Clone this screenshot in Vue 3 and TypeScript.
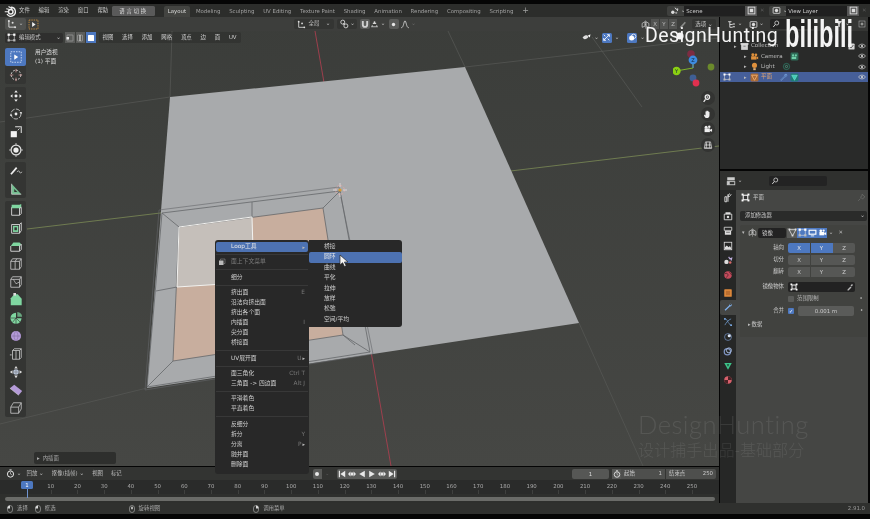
<template>
  <div class="app">
    <header class="topbar">
      <Ic n="blender" class="logo" :s="12" />
      <nav class="top-menu">
        <span v-for="m in topMenus" :key="m">{{ m }}</span>
      </nav>
      <span class="lang-btn">语言切换</span>
      <nav class="tabs">
        <span v-for="t in workspaces" :key="t" class="tab" :class="{ on: t === 'Layout' }">{{ t }}</span>
        <span class="tab plus">+</span>
      </nav>
      <div class="scene-box">
        <span class="scene-ic"><Ic n="scene" :s="9" /><i class="caret">⌄</i></span>
        <span class="scene-field">Scene</span>
        <span class="copy"><Ic n="copy" :s="9" /></span>
        <span class="close">✕</span>
      </div>
      <div class="scene-box layer">
        <span class="scene-ic"><Ic n="layer" :s="9" /><i class="caret">⌄</i></span>
        <span class="scene-field">View Layer</span>
        <span class="copy"><Ic n="copy" :s="9" /></span>
        <span class="close">✕</span>
      </div>
    </header>

    <div class="main">
      <div class="left">
        <section class="viewport">
          <svg class="scene" viewBox="0 17 719 449" width="719" height="449">
            <line x1="27" y1="229" x2="719" y2="146" stroke="#7b8a55" stroke-width=".8" />
            <line x1="315" y1="31" x2="391" y2="466" stroke="#a8404f" stroke-width=".9" />
            <g stroke="#585956" stroke-width=".7">
              <line x1="172" y1="31" x2="170" y2="97" />
              <line x1="0" y1="122" x2="170" y2="97" />
              <line x1="0" y1="424" x2="147" y2="388" />
              <line x1="448" y1="31" x2="465" y2="67" />
              <line x1="592" y1="37" x2="642" y2="107" />
              <line x1="579" y1="323" x2="643" y2="466" />
              <line x1="465" y1="67" x2="719" y2="38" />
            </g>
            <polygon points="170,97 465,67 579,323 147,388" fill="#a8aaac" />
            <polygon points="179,227 323,208 343,335 173,361" fill="#c8ae9e" />
            <polygon points="179,227 252,217 254,282 177,287" fill="#c5bfba" />
            <g fill="none" stroke="#65676a" stroke-width=".8">
              <polygon points="162,213 340,191 370,352 147,387" />
              <polygon points="159,210 339,187 373,354 145,390" stroke-width=".6" />
              <polygon points="179,227 323,208 343,335 173,361" />
              <path d="M162 213 179 227M340 191 323 208M370 352 343 335M147 387 173 361M252 202 252 217M156 291 177 287M254 282 258 350M254 282 343 274M355 345 343 335" />
            </g>
            <polygon points="179,227 252,217 254,282 177,287" fill="none" stroke="#f2f2f0" stroke-width="1" />
            <g fill="none" stroke="#e6a3a3" stroke-width=".7">
              <circle cx="340" cy="190" r="4.5" stroke-dasharray="2 1.5" />
              <path d="M340 183v4M340 193v4M333 190h4M343 190h4" stroke="#f0e8e8" />
            </g>
            <circle cx="340" cy="190" r="1.6" fill="#d99a2e" />
            <circle cx="680" cy="36" r="3.6" fill="#f4f4f4" />
          </svg>

          <div class="tool-header">
            <span class="editor-type"><Ic n="axes" :s="10" /><i class="caret">⌄</i></span>
            <span class="active-tool"><Ic n="selectOrange" :s="11" /></span>
            <span class="orient"><Ic n="axes" :s="9" /><b>全局</b><i class="caret">⌄</i></span>
            <span class="pivot"><Ic n="pivot" :s="10" /><i class="caret">⌄</i></span>
            <span class="snap"><Ic n="magnet" :s="9" class="snap-mag" /><Ic n="snap" :s="9" /><i class="caret">⌄</i></span>
            <span class="prop-edit"><Ic n="dot" :s="9" /></span>
            <span class="falloff"><Ic n="falloff" :s="10" /><i class="caret dim">⌄</i></span>
            <span class="grow" />
            <span class="axis-box">
              <Ic n="mirror" :s="9" />
              <b>X</b><b>Y</b><b>Z</b>
              <Ic n="knifeDim" :s="9" />
            </span>
            <span class="opts">选项<i class="caret">⌄</i></span>
          </div>

          <div class="mode-row">
            <span class="mode-select"><Ic n="editMode" :s="9" /><b>编辑模式</b><i class="caret">⌄</i></span>
            <span class="sel-modes">
              <i><Ic n="vert" :s="8" /></i><i><Ic n="edge" :s="8" /></i><i class="on"><Ic n="face" :s="8" /></i>
            </span>
            <nav class="mode-menu">
              <span v-for="m in modeMenus" :key="m">{{ m }}</span>
            </nav>
            <span class="grow" />
            <span class="vis-tools">
              <Ic n="eyeArrow" :s="9" /><i class="caret">⌄</i>
              <span class="blue-btn"><Ic n="gizmoArrows" :s="9" /></span><i class="caret">⌄</i>
              <span class="blue-btn round"><Ic n="overlay" :s="9" /></span><i class="caret">⌄</i>
            </span>
          </div>

          <div class="view-body">
            <div class="toolbar">
              <div v-for="(grp, i) in toolGroups" :key="i" class="tool-group">
                <span v-for="t in grp" :key="t" class="tool" :class="{ on: t === 'select' }">
                  <Ic :n="t" :s="14" />
                </span>
              </div>
            </div>
            <div class="view-info">
              <p>用户透视</p>
              <p>(1) 平面</p>
            </div>
          </div>

          <!-- 导航小工具 -->
          <svg class="gizmo" viewBox="0 0 60 46" width="60" height="46">
            <circle cx="18" cy="5" r="3.8" fill="#7d2c42" />
            <circle cx="38" cy="18" r="3.4" fill="#6b8a2b" />
            <circle cx="20" cy="29" r="3.4" fill="#3f5f95" />
            <circle cx="23" cy="34" r="3.4" fill="#e0304f" />
            <path d="M20 11V19L3 22" fill="none" stroke="#7fb32a" stroke-width="1" />
            <path d="M20 11V19" fill="none" stroke="#4d8ad8" stroke-width="1" />
            <circle cx="20" cy="11" r="4.4" fill="#3d8be0" />
            <text x="20" y="13" class="gz">Z</text>
            <circle cx="3.5" cy="22" r="4.2" fill="#8bd012" />
            <text x="3.5" y="24" class="gz">Y</text>
          </svg>
          <div class="nav-btns">
            <span v-for="n in navIcons" :key="n" class="nav-btn"><Ic :n="n" :s="10" /></span>
          </div>

          <div class="last-op"><i>▸</i>内插面</div>

          <!-- 右键菜单 -->
          <div class="menu main-menu">
            <template v-for="(row, i) in contextMenu" :key="i">
              <div v-if="row === '-'" class="sep" />
              <div v-else class="row" :class="{ active: row.active, muted: row.muted }">
                <Ic v-if="row.muted" n="ctxCube" :s="8" class="row-ic" />
                <span class="label">{{ row.label }}</span>
                <span v-if="row.key" class="key">{{ row.key }}</span>
                <span v-if="row.sub" class="arrow">▸</span>
              </div>
            </template>
          </div>
          <div class="menu sub-menu">
            <div v-for="s in loopTools" :key="s" class="row" :class="{ active: s === '圆环' }">
              <span class="label">{{ s }}</span>
            </div>
          </div>
          <svg class="cursor" viewBox="0 0 10 14" width="10" height="14">
            <path d="M1 1V11L3.6 8.7 5.4 12.6 7.2 11.8 5.4 8H9Z" fill="#f4f4f4" stroke="#222" stroke-width=".7" />
          </svg>
        </section>

        <section class="timeline">
          <div class="tl-header">
            <Ic n="clock" :s="9" class="tl-clock" /><i class="caret">⌄</i>
            <span class="tl-menu first">回放<i class="caret">⌄</i></span>
            <span class="tl-menu">抠像(插帧)<i class="caret">⌄</i></span>
            <span class="tl-menu">视图</span>
            <span class="tl-menu">标记</span>
            <span class="rec" /><span class="rec-caret">⌄</span>
            <span class="transport">
              <svg v-for="p in transport" :key="p" viewBox="0 0 10 10" width="8" height="8"><path :d="p" fill="#e8e8e8" /></svg>
            </span>
            <span class="grow" />
            <span class="frame-field">1</span>
            <span class="clock-btn"><Ic n="clock" :s="8" /></span>
            <span class="range"><b>起始</b><b>1</b></span>
            <span class="range end"><b>结束点</b><b>250</b></span>
          </div>
          <div class="ruler">
            <span v-for="f in frames" :key="f" class="tick">{{ f }}</span>
            <span class="cur-frame">1</span>
            <span class="cur-line" />
          </div>
          <div class="tl-track"><span class="scroll" /></div>
        </section>
      </div>

      <aside class="right">
        <section class="outliner">
          <div class="ol-header">
            <span class="ol-btn"><Ic n="outlinerDisp" :s="9" /><i class="caret">⌄</i></span>
            <span class="ol-btn"><Ic n="layer" :s="9" /><i class="caret">⌄</i></span>
            <span class="search"><Ic n="search" :s="8" /></span>
            <span class="grow" />
            <Ic n="filter" :s="8" /><i class="caret">⌄</i>
            <Ic n="newCol" :s="8" class="new-col" />
          </div>
          <div class="ol-rows">
            <div v-for="r in outlinerRows" :key="r.name" class="ol-row" :class="[`lv${r.level}`, { sel: r.sel }]">
              <Ic v-if="r.sel" n="editMode" :s="8" class="ol-mode" />
              <i class="tri">▸</i>
              <Ic :n="r.icon" :s="9" class="ol-ic" />
              <span class="ol-name">{{ r.name }}</span>
              <span class="ol-extra">
                <Ic v-for="x in r.extra" :key="x" :n="x" :s="9" />
              </span>
              <span class="grow" />
              <Ic v-if="r.check" n="check" :s="7" class="ol-check" />
              <Ic n="eye" :s="8" />
            </div>
          </div>
        </section>

        <section class="props">
          <div class="prop-header">
            <span class="ol-btn"><Ic n="propsType" :s="10" /><i class="caret">⌄</i></span>
            <span class="search wide"><Ic n="search" :s="8" /></span>
          </div>
          <div class="prop-main">
            <div class="prop-tabs">
              <div v-for="(grp, i) in propTabs" :key="i" class="tab-group">
                <span v-for="t in grp" :key="t" class="ptab" :class="{ on: t === 'pWrench' }"><Ic :n="t" :s="10" /></span>
              </div>
            </div>
            <div class="panel">
              <div class="obj-line">
                <Ic n="meshOutline" :s="9" /><span>平面</span><span class="grow" /><Ic n="pin" :s="9" />
              </div>
              <div class="add-mod"><span>添加修改器</span><i class="caret">⌄</i></div>
              <div class="mod-box">
                <div class="mod-head">
                  <i class="tri down">▾</i>
                  <Ic n="mirror" :s="9" />
                  <span class="mod-name">镜像</span>
                  <span class="mod-toggles">
                    <i><Ic n="meshV" :s="9" /></i><i class="on"><Ic n="editMode" :s="9" /></i><i class="on"><Ic n="screen" :s="9" /></i><i class="on"><Ic n="camera" :s="9" /></i>
                  </span>
                  <i class="caret">⌄</i>
                  <span class="mod-x">✕</span>
                </div>
                <div v-for="(r, i) in axisRows" :key="r.label" class="form-row" :class="{ 'first-axis': i === 0 }">
                  <label>{{ r.label }}</label>
                  <div class="seg">
                    <span v-for="(a, j) in ['X', 'Y', 'Z']" :key="a" :class="{ on: r.on.includes(j) }">{{ a }}</span>
                  </div>
                </div>
                <div class="form-row mirror-obj">
                  <label>镜像物体</label>
                  <div class="obj-field"><Ic n="meshOutline" :s="8" /><span class="grow" /><Ic n="dropper" :s="8" /></div>
                </div>
                <div class="form-row limit">
                  <label />
                  <span class="cb" /><span class="cb-text">范围限制</span><span class="dec">•</span>
                </div>
                <div class="form-row merge">
                  <label>合并</label>
                  <span class="cb on">✓</span><span class="num">0.001 m</span><span class="dec">•</span>
                </div>
                <div class="sub-panel"><i class="tri">▸</i>数据</div>
              </div>
            </div>
          </div>
        </section>
      </aside>
    </div>

    <footer class="status">
      <span class="st first"><Ic n="mouseL" :s="8" />选择</span>
      <span class="st box"><Ic n="mouseL" :s="8" />框选</span>
      <span class="st rot"><Ic n="mouseM" :s="8" />旋转视图</span>
      <span class="st call"><Ic n="mouseR" :s="8" />调用菜单</span>
      <span class="grow" />
      <span class="version">2.91.0</span>
    </footer>

    <!-- 视频水印 -->
    <div class="wm-top">
      <span class="wm-name">DesignHunting</span>
      <span class="wm-bili">bilibili</span>
    </div>
    <div class="wm-bottom">
      <p class="wm-en">DesignHunting</p>
      <p class="wm-cn">设计捕手出品-基础部分</p>
    </div>
  </div>
</template>

<script setup lang="ts">
import { h } from 'vue'

type MenuRow = '-' | { label: string; key?: string; sub?: boolean; active?: boolean; muted?: boolean }

const W = 'stroke="#e6e6e6" fill="none"'
const G = '#7fd6a0'

/** 内联图标，全部 16x16 */
const icons: Record<string, string> = {
  blender: `<circle cx="9" cy="9" r="3" fill="none" stroke="#eee" stroke-width="2"/><path d="M1 9h5M3 5l5 1M6 2l5 3" stroke="#eee" stroke-width="1.6"/><path d="M9 3a6 6 0 1 1-5 9" fill="none" stroke="#eee" stroke-width="1.8"/>`,
  scene: `<circle cx="5" cy="11" r="3" fill="#ddd"/><path d="M9 3l2 3 3-1-1 4" ${W} stroke-width="1.6"/><circle cx="11" cy="12" r="2" fill="#999"/>`,
  layer: `<rect x="2" y="3" width="12" height="10" rx="1" ${W} stroke-width="1.4"/><circle cx="8" cy="8" r="3" fill="#ddd"/>`,
  copy: `<rect x="2" y="2" width="12" height="12" fill="none" stroke="#ddd" stroke-width="1.6"/><rect x="5" y="5" width="6" height="6" fill="#ddd"/>`,
  axes: `<path d="M3 3v10h10" ${W} stroke-width="1.4"/><circle cx="3" cy="3" r="1.6" fill="#ddd"/><circle cx="13" cy="13" r="1.6" fill="#ddd"/><circle cx="9" cy="6" r="1.6" fill="#ddd"/>`,
  selectOrange: `<rect x="1.5" y="1.5" width="13" height="13" fill="none" stroke="#e09a3a" stroke-width="1.1" stroke-dasharray="2 1.4"/><path d="M6 4.5v7l5-3.5z" fill="#eee"/>`,
  pivot: `<circle cx="6" cy="5" r="3.2" ${W} stroke-width="1.3"/><circle cx="11" cy="11" r="3.2" ${W} stroke-width="1.3"/><circle cx="8" cy="8" r="1.3" fill="#eee"/>`,
  magnet: `<path d="M3 3v6a5 5 0 0 0 10 0V3h-3v6a2 2 0 0 1-4 0V3z" fill="#d0d0d0"/>`,
  snap: `<path d="M2 12h12M4 12V9M12 12V9" stroke="#ddd" stroke-width="1.3"/><path d="M5 5h6v2H5z" fill="#ddd"/><circle cx="8" cy="4" r="1.6" fill="#ddd"/>`,
  dot: `<circle cx="8" cy="8" r="3" fill="#e6e6e6"/>`,
  falloff: `<path d="M2 14C6 14 6 3 8 3s2 11 6 11" ${W} stroke-width="1.2"/>`,
  mirror: `<path d="M7 3 2 6v7l5-2zM9 3l5 3v7l-5-2z" ${W} stroke-width="1.1"/><path d="M8 1v14" stroke="#e6e6e6" stroke-dasharray="2 1"/>`,
  knifeDim: `<path d="M3 13 12 3l2 2-8 9z" fill="#8a8b89"/>`,
  editMode: `<path d="M3 3h10v10H3z" fill="none" stroke="#e6e6e6" stroke-width="1"/><rect x="1" y="1" width="4" height="4" fill="#fff"/><rect x="11" y="1" width="4" height="4" fill="#fff"/><rect x="1" y="11" width="4" height="4" fill="#bbb"/><rect x="11" y="11" width="4" height="4" fill="#bbb"/>`,
  vert: `<rect x="2" y="2" width="12" height="12" rx="1" fill="none" stroke="#bbb"/><rect x="1" y="6" width="5" height="5" fill="#eee"/>`,
  edge: `<rect x="3" y="2" width="10" height="12" rx="1" fill="none" stroke="#bbb"/><path d="M8 2v12" stroke="#eee" stroke-width="2"/>`,
  face: `<rect x="2" y="2" width="12" height="12" rx="1" fill="#fff"/>`,
  eyeArrow: `<path d="M1 8c3-4 6-4 7-4s3 1 3 3-4 4-6 4-3-2-4-3z" fill="#ddd"/><path d="M10 5l5-3-1 6z" fill="#fff"/>`,
  gizmoArrows: `<path d="M3 13 13 3M9 3h4v4M3 9v4h4M3 3l3 3M13 13l-3-3" stroke="#fff" stroke-width="1.5" fill="none"/>`,
  overlay: `<circle cx="6.5" cy="9" r="4.5" fill="#fff"/><circle cx="10" cy="6" r="4" fill="none" stroke="#fff" stroke-width="1.3"/>`,

  select: `<rect x="2" y="2" width="12" height="12" fill="none" stroke="#dfe8f8" stroke-width=".9" stroke-dasharray="1.8 1.2"/><path d="M6 5v6l4.5-3z" fill="#fff"/>`,
  cursor3d: `<circle cx="8" cy="8" r="5.5" fill="none" stroke="#ddd" stroke-dasharray="2.2 1.4"/><path d="M8 1v4M8 11v4M1 8h4M11 8h4" stroke="#e8a0a0" stroke-width=".8"/>`,
  move: `<path d="M8 1.5 10 4H6zM8 14.5 6 12h4zM1.5 8 4 6v4zM14.5 8 12 10V6z" fill="#eee"/><circle cx="8" cy="8" r="1.7" fill="#eee"/>`,
  rotate: `<circle cx="8" cy="8" r="5.7" fill="none" stroke="#ccc" stroke-width="1" stroke-dasharray="5 1.5"/><circle cx="8" cy="8" r="1.6" fill="#eee"/><path d="M2 8l-1 2h3zM14 8l1-2h-3z" fill="#eee"/>`,
  scale: `<rect x="2" y="7" width="7" height="7" fill="#f2f2f2"/><path d="M7 2h7v7" fill="none" stroke="#ddd" stroke-width="1.2"/><path d="M10 6l2-2" stroke="#ddd"/>`,
  transform: `<circle cx="8" cy="8" r="5.6" fill="none" stroke="#ddd" stroke-width="1.4"/><circle cx="8" cy="8" r="3" fill="#eee"/><path d="M8 0v3M8 13v3M0 8h3M13 8h3" stroke="#ccc"/>`,
  annotate: `<path d="M1.5 11 8 3.5l1.5 1.3L3 12.3z" fill="#eee"/><path d="M9 9c2-2 3-1 3 0s1 2 3 0" fill="none" stroke="#ccc" stroke-width=".9"/>`,
  measure: `<path d="M3 2v12h11z" fill="${G}" opacity=".85"/><path d="M6 8v3.5h3.5z" fill="#333"/><path d="M3 2v12h11" fill="none" stroke="#ddd" stroke-width=".8"/>`,
  extrude: `<path d="M3 5V14H12V5z" fill="none" stroke="#ddd"/><path d="M3 2h9l2-1v4l-2 1H3z" fill="${G}"/><path d="M12 6l2-1v7l-2 2" fill="none" stroke="#ddd"/>`,
  inset: `<path d="M3 4h9v10H3zM12 4l2-2v9l-2 3" fill="none" stroke="#ddd"/><rect x="4.6" y="5.5" width="6" height="7" fill="${G}"/><rect x="6.2" y="7.2" width="2.8" height="3.4" fill="#333"/>`,
  bevel: `<path d="M2 8v6h10V8" fill="none" stroke="#ddd"/><path d="M2 8 5 4h7l2 2-2 2z" fill="${G}"/><path d="M12 8l2-2v6l-2 2" fill="none" stroke="#ddd"/>`,
  loopcut: `<path d="M2 5h10v9H2zM2 5l2-3h10l-2 3M14 2v9l-2 3M7 5v9M7 5l2-3" fill="none" stroke="#ccc" stroke-width=".9"/>`,
  knife: `<path d="M2 5h10v9H2zM2 5l2-3h10l-2 3M14 2v9l-2 3" fill="none" stroke="#ccc" stroke-width=".9"/><path d="M5 5l3 5 4-2" fill="none" stroke="#ccc" stroke-width=".8"/>`,
  polybuild: `<path d="M6 1.5h4l4.5 5V14H2V6z" fill="${G}"/><rect x="5" y="0" width="3" height="3" fill="#ddd"/>`,
  spin: `<path d="M8 2a6.3 6.3 0 1 0 6.3 6.3H8z" fill="${G}"/><path d="M9.5 1a6 6 0 0 1 5.5 5.5H9.5z" fill="${G}" opacity=".7"/><path d="M8 8 2 8M8 8 4 13M8 8 8 15M8 8 13 13" stroke="#333" stroke-width=".7"/>`,
  smooth: `<circle cx="8" cy="8" r="5.8" fill="#b49ad8"/><path d="M2.5 8h11M8 2.5c-3 3-3 8 0 11M8 2.5c3 3 3 8 0 11" fill="none" stroke="#7d6a9a" stroke-width=".6"/>`,
  shrink: `<path d="M4 4h8v10H4zM4 4l2-2h8l-2 2M14 2v10l-2 2M8 4v10" fill="none" stroke="#ccc" stroke-width=".9"/><path d="M1 9h2" stroke="#ccc"/>`,
  push: `<path d="M8 1 10 4H6zM8 15l-2-3h4zM1 8l3-2v4zM15 8l-3 2V6z" fill="#ddd"/><circle cx="8" cy="8" r="3.2" fill="#b8c4d8"/><path d="M4.5 8h7M8 4.5v7" stroke="#666" stroke-width=".5"/>`,
  shear: `<path d="M1 6 6 2l9 7-4 5z" fill="#b49ad8"/><path d="M1 6l10 8" stroke="#ddd" stroke-width=".6"/>`,
  rip: `<path d="M2 7h9v7H2zM2 7l3-5h9l-3 5M14 2v7l-3 5" fill="none" stroke="#ccc" stroke-width=".9"/>`,
  ctxCube: `<rect x="2" y="5" width="9" height="9" fill="#bbb"/><path d="M5 5V2h9v9h-3" fill="none" stroke="#999"/>`,

  navZoom: `<circle cx="7" cy="6.5" r="4.5" fill="#eee"/><circle cx="7" cy="6.5" r="2.5" fill="#333"/><path d="M7 5v3M5.5 6.5h3" stroke="#eee"/><path d="M4 10 1 14" stroke="#eee" stroke-width="2"/>`,
  navHand: `<path d="M4 8V4.5a.8.8 0 0 1 1.6 0V7V3a.8.8 0 0 1 1.6 0v4V3.500a.8.8 0 0 1 1.600 0V7V5a.8.8 0 0 1 1.600 0v5c0 3-1.600 4.500-4 4.500S2.500 13 1.500 9.500c.5-.8 1.800-.5 2.500.8z" fill="#eee"/>`,
  navCam: `<circle cx="5" cy="5" r="2.4" fill="#eee"/><circle cx="10" cy="4.5" r="2" fill="#eee"/><rect x="2.5" y="7" width="8.5" height="6" fill="#eee"/><path d="M11 9l3.5-1.5v5L11 11z" fill="#eee"/>`,
  navGrid: `<path d="M4 3h8l2 10H2z" fill="none" stroke="#eee"/><path d="M6 3 5 13M10 3l1 10M3 8h10M2 13h12" stroke="#eee" stroke-width="1.1"/>`,

  clock: `<circle cx="8" cy="9" r="5.5" fill="none" stroke="#eee" stroke-width="1.7"/><path d="M8 9V5.5M8 9l3 1.5" stroke="#eee"/><path d="M6 1.5h4" stroke="#eee" stroke-width="1.5"/>`,
  outlinerDisp: `<path d="M2 3h6M5 3v10h5M5 8h5" ${W} stroke-width="1.5"/><path d="M10 7h4M10 12h4" stroke="#e6e6e6" stroke-width="2"/>`,
  search: `<circle cx="9.5" cy="6" r="4" fill="none" stroke="#ddd" stroke-width="1.5"/><path d="M6.5 9 2.5 14" stroke="#ddd" stroke-width="1.8"/>`,
  filter: `<path d="M2 2h12L9.5 8v6l-3-1V8z" fill="#ddd"/>`,
  newCol: `<rect x="2" y="2" width="12" height="12" fill="none" stroke="#bbb"/><path d="M8 5v6M5 8h6" stroke="#ddd" stroke-width="1.4"/>`,
  collection: `<rect x="2" y="4" width="12" height="10" fill="#d0d0d0"/><path d="M1 2h14v3H1z" fill="#e4e4e4"/><path d="M6 7.5h4" stroke="#444"/>`,
  camera: `<circle cx="5" cy="5" r="2.4" fill="#fff"/><circle cx="10" cy="4.5" r="2" fill="#fff"/><rect x="2.5" y="7" width="8.5" height="6" fill="#fff"/><path d="M11 9l3.5-1.5v5L11 11z" fill="#fff"/>`,
  camOrange: `<circle cx="5" cy="5" r="2.6" fill="#e0913c"/><circle cx="10.5" cy="5" r="2.4" fill="#e0913c"/><rect x="2" y="7.5" width="9.5" height="6" fill="#e0913c"/><path d="M11.5 9.5l3-1.5v5l-3-1.5z" fill="#e0913c"/>`,
  camData: `<rect x="1" y="1" width="14" height="14" rx="2" fill="#2f6b58"/><circle cx="5.5" cy="6" r="2" fill="#6fcfa8"/><circle cx="10.5" cy="6" r="1.8" fill="#6fcfa8"/><rect x="3" y="8.5" width="8" height="4" fill="#6fcfa8"/>`,
  bulb: `<circle cx="8" cy="6" r="4.5" fill="#e0913c"/><rect x="5.8" y="11" width="4.4" height="3.5" fill="#e0b27c"/>`,
  lightData: `<circle cx="8" cy="8" r="5.5" fill="none" stroke="#2f9c80"/><circle cx="8" cy="8" r="2" fill="none" stroke="#58c8a8"/>`,
  meshO: `<rect x="1" y="1" width="14" height="14" rx="2" fill="#a86a38"/><path d="M3 4h10L8 13z" fill="none" stroke="#f4b070" stroke-width="1.5"/>`,
  wrench: `<path d="M13.5 2.5c-2-.8-4 .6-3.7 3L3 12.3 4 13.5l6.7-6.8c2.4.3 3.8-1.700 3-3.700l-1.800 1.800-1.300-.5-.4-1.200z" fill="none" stroke="#7aa8e0" stroke-width="1"/>`,
  meshData: `<rect x="1" y="1" width="14" height="14" rx="2" fill="#1e7d78"/><path d="M3 4h10L8 13z" fill="#3fd0b8" stroke="#a6f0e4" stroke-width=".7"/>`,
  check: `<rect x="1" y="1" width="14" height="14" rx="2" fill="#d8d8d8"/><path d="M4 8l3 3 5-6" fill="none" stroke="#333" stroke-width="2"/>`,
  eye: `<path d="M1 8c3-5 11-5 14 0-3 5-11 5-14 0z" fill="none" stroke="#d8d8d8" stroke-width="1.3"/><circle cx="8" cy="8" r="2.2" fill="#d8d8d8"/>`,
  propsType: `<rect x="2" y="2" width="12" height="5" fill="#ccc"/><rect x="2" y="9" width="12" height="5" fill="none" stroke="#ccc" stroke-width="1.4"/><rect x="2" y="9" width="4" height="5" fill="#ccc"/>`,
  pTool: `<path d="M3 14V6h3v8zM8 14V2M8 6c2 0 4-1 5-4M8 6c0-2 1-4 3-5" stroke="#ddd" stroke-width="1.5" fill="none"/>`,
  pRender: `<path d="M2 5h12v9H2z" fill="none" stroke="#ddd" stroke-width="1.4"/><path d="M4 2h8v3H4z" fill="#ddd"/><circle cx="8" cy="9.5" r="2" fill="#ddd"/>`,
  pOutput: `<path d="M2 2h12v5H2z" fill="none" stroke="#ddd" stroke-width="1.3"/><path d="M3 8h10v6H3z" fill="#ddd"/><path d="M5 10h6" stroke="#333"/>`,
  pViewLayer: `<rect x="2" y="2" width="12" height="12" fill="none" stroke="#ddd" stroke-width="1.3"/><path d="M3 10l3-3 3 3 2-2 2 3v2H3z" fill="#ddd"/>`,
  pScene: `<circle cx="5.5" cy="11" r="3.5" fill="#ddd"/><path d="M9 3l2 3 3-1-1 4" fill="none" stroke="#c0b0e0" stroke-width="1.7"/><circle cx="11.5" cy="12" r="2" fill="#d86a6a"/>`,
  pWorld: `<circle cx="8" cy="8" r="6" fill="#c44a5c"/><path d="M3 6c3-2 5 0 5 2s-2 3-3 4M10 3c1 2 3 3 4 5" fill="none" stroke="#3a2022" stroke-width="1.1"/>`,
  pObject: `<rect x="2" y="2" width="12" height="12" rx="1" fill="#e08a3c"/><rect x="4.5" y="4.5" width="7" height="7" fill="#bb6f30"/>`,
  pWrench: `<path d="M13.5 2.5c-2-.8-4 .6-3.7 3L2.5 12.5 4 14l7-7c2.4.3 3.8-1.700 3-3.700l-1.800 1.800-1.500-.5-.3-1.400z" fill="#7fb0ee"/>`,
  pParticle: `<circle cx="3" cy="3" r="1.5" fill="#7fb0ee"/><circle cx="13" cy="13" r="1.5" fill="#7fb0ee"/><path d="M3 3c5 0 4 8 10 10M13 3C8 5 5 9 3 13" fill="none" stroke="#7fb0ee" stroke-width="1"/>`,
  pPhysics: `<circle cx="8" cy="8" r="5.5" fill="none" stroke="#7fa0d8" stroke-width="1"/><circle cx="10" cy="6" r="2.5" fill="#dfe8f8"/>`,
  pConstraint: `<circle cx="7" cy="9" r="5" fill="none" stroke="#7f94c0" stroke-width="2"/><circle cx="9.5" cy="7" r="4" fill="none" stroke="#a8bce0" stroke-width="1.5"/>`,
  pData: `<path d="M2 3h12L8 14z" fill="#3ec48a"/><path d="M6 5h4L8 9z" fill="#1e4a38"/>`,
  pMaterial: `<circle cx="8" cy="8" r="6" fill="#d8606c"/><path d="M8 2v6h6a6 6 0 0 0-6-6zM8 8H2a6 6 0 0 0 6 6z" fill="#4a2226"/>`,
  meshOutline: `<rect x="3" y="3" width="10" height="10" fill="#f0f0f0"/><rect x="1" y="1" width="3.5" height="3.5" fill="#fff"/><rect x="11.5" y="1" width="3.5" height="3.5" fill="#fff"/><rect x="1" y="11.5" width="3.5" height="3.5" fill="#fff"/><rect x="11.5" y="11.5" width="3.5" height="3.5" fill="#fff"/><rect x="5" y="5" width="6" height="6" fill="#333"/>`,
  pin: `<path d="M9 2l5 5-2 1-2 3-4-4 3-2zM6 10l-4 4" fill="none" stroke="#6f706d" stroke-width="1.2"/>`,
  meshV: `<path d="M2 3h12L8 14z" fill="none" stroke="#ddd" stroke-width="1.5"/><rect x="1" y="1" width="3" height="3" fill="#ddd"/><rect x="12" y="1" width="3" height="3" fill="#ddd"/><rect x="6.5" y="12" width="3" height="3" fill="#ddd"/>`,
  screen: `<rect x="1" y="3" width="14" height="9" fill="#fff"/><rect x="3" y="5" width="10" height="5" fill="#4d78c0"/><path d="M5 14h6" stroke="#fff" stroke-width="1.5"/>`,
  dropper: `<path d="M3 13l6-6 2 2-6 6H3zM9 5l3-3 2 2-3 3" fill="#bbb"/>`,
  mouseL: `<rect x="3" y="1" width="10" height="14" rx="5" fill="none" stroke="#ccc"/><path d="M8 1C5 1 3 3 3 6v1h5z" fill="#ddd"/>`,
  mouseM: `<rect x="3" y="1" width="10" height="14" rx="5" fill="none" stroke="#ccc"/><rect x="6.5" y="3.5" width="3" height="5" fill="#ddd"/>`,
  mouseR: `<rect x="3" y="1" width="10" height="14" rx="5" fill="none" stroke="#ccc"/><path d="M8 1c3 0 5 2 5 5v1H8z" fill="#ddd"/>`,
}

/** 图标小组件 */
const Ic = (props: { n: string; s?: number }) =>
  h('svg', {
    viewBox: '0 0 16 16',
    width: props.s ?? 10,
    height: props.s ?? 10,
    innerHTML: icons[props.n] ?? '',
  })
Ic.props = ['n', 's']

const topMenus = ['文件', '编辑', '渲染', '窗口', '帮助']
const workspaces = ['Layout', 'Modeling', 'Sculpting', 'UV Editing', 'Texture Paint', 'Shading', 'Animation', 'Rendering', 'Compositing', 'Scripting']
const modeMenus = ['视图', '选择', '添加', '网格', '顶点', '边', '面', 'UV']

const toolGroups = [
  ['select', 'cursor3d'],
  ['move', 'rotate', 'scale', 'transform'],
  ['annotate', 'measure'],
  ['extrude', 'inset', 'bevel', 'loopcut', 'knife', 'polybuild', 'spin', 'smooth', 'shrink', 'push', 'shear', 'rip'],
]
const navIcons = ['navZoom', 'navHand', 'navCam', 'navGrid']

const contextMenu: MenuRow[] = [
  { label: 'Loop工具', sub: true, active: true },
  '-',
  { label: '面上下文菜单', muted: true },
  '-',
  { label: '细分' },
  '-',
  { label: '挤出面', key: 'E' },
  { label: '沿法向挤出面' },
  { label: '挤出各个面' },
  { label: '内插面', key: 'I' },
  { label: '尖分面' },
  { label: '桥接面' },
  '-',
  { label: 'UV展开面', key: 'U', sub: true },
  '-',
  { label: '面三角化', key: 'Ctrl T' },
  { label: '三角面 -> 四边面', key: 'Alt J' },
  '-',
  { label: '平滑着色' },
  { label: '平直着色' },
  '-',
  { label: '反细分' },
  { label: '拆分', key: 'Y' },
  { label: '分离', key: 'P', sub: true },
  { label: '融并面' },
  { label: '删除面' },
]
const loopTools = ['桥接', '圆环', '曲线', '平化', '拉伸', '放样', '松弛', '空间/平均']

const transport = [
  'M1 1h1.5v8H1zM9 1v8L3 5z',
  'M0 5l3-3v6zM10 5 7 2v6zM3.5 3h3v4h-3z',
  'M8.5 1v8L1.5 5z',
  'M1.5 1v8l7-4z',
  'M0 5l3-3v6zM10 5 7 2v6zM3.5 3h3v4h-3z ',
  'M9 1H7.5v8H9zM1 1v8l6-4z',
]

// 时间线刻度，每 10 帧一格
const frames = Array.from({ length: 25 }, (_, i) => (i + 1) * 10)

const outlinerRows = [
  { name: 'Collection', icon: 'collection', level: 1, extra: [], check: true, sel: false },
  { name: 'Camera', icon: 'camOrange', level: 2, extra: ['camData'], check: false, sel: false },
  { name: 'Light', icon: 'bulb', level: 2, extra: ['lightData'], check: false, sel: false },
  { name: '平面', icon: 'meshO', level: 2, extra: ['wrench', 'meshData'], check: false, sel: true },
]

const propTabs = [
  ['pTool'],
  ['pRender', 'pOutput', 'pViewLayer', 'pScene', 'pWorld'],
  ['pObject', 'pWrench', 'pParticle', 'pPhysics', 'pConstraint', 'pData', 'pMaterial'],
]

const axisRows = [
  { label: '轴向', on: [0, 1] },
  { label: '切分', on: [] as number[] },
  { label: '翻转', on: [] as number[] },
]
</script>

<style>
html, body {
  margin: 0;
  background: #000;
}
</style>

<style scoped>
.app {
  position: relative;
  width: 870px;
  height: 519px;
  overflow: hidden;
  display: flex;
  flex-direction: column;
  background: #050505;
  color: #c9c9c9;
  font: 5.4px/1 'DejaVu Sans', 'Noto Sans CJK SC', sans-serif;
  filter: blur(0.45px);
}
i { font-style: normal; }
b { font-weight: 400; }
p { margin: 0; }
svg { display: block; flex: none; }
.grow { flex: 1; }
.caret {
  font-size: 6px;
  line-height: 4px;
  color: #bdbdbd;
  margin-left: 1.5px;
  height: 6px;
}
.caret.dim { color: #666; }

/* 顶栏 */
.topbar {
  margin-top: 4px;
  height: 13px;
  flex: none;
  display: flex;
  align-items: center;
  background: #2c2d2b;
}
.logo { margin-left: 4px; }
.top-menu { display: flex; gap: 8.8px; margin-left: 3px; }
.lang-btn {
  margin-left: 4px;
  width: 43px;
  height: 10px;
  line-height: 10px;
  background: #5a5a5a;
  border-radius: 1.5px;
  text-align: center;
  letter-spacing: 1.8px;
  color: #d8d8d8;
}
.tabs { display: flex; align-self: flex-end; margin-left: 8.5px; height: 11px; width: 382px; flex: none; }
.tab { padding: 0 4.4px; line-height: 10.5px; color: #a2a2a2; white-space: nowrap; }
.tab.on { background: #434441; color: #dcdcdc; border-radius: 2px 2px 0 0; padding: 0 4px; margin-right: 1.5px; }
.tab.plus { font-size: 8px; margin-left: 0; }
.scene-box { display: flex; align-items: center; margin-left: 121.5px; height: 10px; }
.scene-box.layer { margin-left: 2px; }
.scene-ic { display: flex; align-items: center; width: 17px; height: 10px; padding-left: 3px; background: #3f403e; box-sizing: border-box; border-radius: 2px 0 0 2px; }
.scene-field { width: 61px; height: 10px; line-height: 10px; padding-left: 2px; background: #202020; box-sizing: border-box; color: #cfcfcf; }
.copy { width: 12px; height: 10px; background: #555; display: flex; align-items: center; justify-content: center; }
.close { width: 10px; text-align: center; color: #5c5c5c; }

/* 主区域 */
.main { flex: 1; display: flex; min-height: 0; }
.left { width: 719px; flex: none; display: flex; flex-direction: column; gap: 1.5px; }
.right { flex: 1; margin: 0 2px 0 1px; display: flex; flex-direction: column; gap: 2px; min-width: 0; }

/* 3D 视图 */
.viewport {
  position: relative;
  z-index: 1;
  flex: 1;
  background: linear-gradient(#3b3d3a, #464744);
}
.scene { position: absolute; left: 0; top: 0; }
.tool-header, .mode-row, .view-body { position: relative; }
.tool-header {
  height: 14px;
  display: flex;
  align-items: center;
  background: #3d3e3c;
  padding-right: 3px;
}
.editor-type { display: flex; align-items: center; margin-left: 5px; background: #50514f; padding: 1px 2px; border-radius: 2px; }
.active-tool { margin-left: 2px; padding: 0; }
.orient { display: flex; align-items: center; gap: 3px; margin-left: 255px; background: #343533; height: 10px; padding: 0 3px; width: 40px; box-sizing: border-box; border-radius: 2px; }
.orient b { flex: 1; }
.pivot { display: flex; align-items: center; margin-left: 3px; background: #343533; height: 10px; padding: 0 2px; border-radius: 2px; }
.snap { display: flex; align-items: center; margin-left: 3px; height: 10px; }
.snap-mag { background: #5a5b59; border-radius: 2px; height: 10px; width: 10px; }
.prop-edit { margin-left: 3px; background: #5a5b59; border-radius: 2px; height: 10px; width: 10px; display: flex; align-items: center; justify-content: center; }
.falloff { display: flex; align-items: center; margin-left: 1px; }
.axis-box { display: flex; align-items: center; gap: 1px; }
.axis-box b { width: 8px; height: 10px; line-height: 10px; text-align: center; background: #525351; color: #bbb; }
.opts { margin-left: 5px; margin-right: 0; background: #343533; width: 24px; height: 10px; line-height: 10px; text-align: center; border-radius: 2px; }
.mode-row { height: 13px; display: flex; align-items: center; padding-right: 74px; }
.mode-select { display: flex; align-items: center; gap: 3px; margin-left: 5px; width: 58px; height: 10px; padding: 0 2px; background: #2f2f2e; box-sizing: border-box; border-radius: 2px; }
.mode-select b { flex: 1; }
.sel-modes { display: flex; margin-left: 2px; gap: 1px; }
.sel-modes i { width: 9.5px; height: 11px; background: #5b5c5a; display: flex; align-items: center; justify-content: center; }
.sel-modes i.on { background: #4d78c0; }
.mode-menu { display: flex; gap: 8.8px; margin-left: 3px; padding: 0 4px; height: 11px; line-height: 11px; background: rgba(30, 30, 30, 0.28); border-radius: 2px; color: #d0d0d0; }
.vis-tools { display: flex; align-items: center; gap: 1px; }
.blue-btn { width: 10px; height: 10px; background: #4d78c0; display: flex; align-items: center; justify-content: center; margin-left: 2px; border-radius: 1.5px; }
.blue-btn.round { margin-left: 7px; }
.view-body { display: flex; align-items: flex-start; }
.toolbar { margin: 4px 0 0 5px; display: flex; flex-direction: column; gap: 3px; width: 21px; }
.tool-group { background: #343533; border-radius: 2px; display: flex; flex-direction: column; }
.tool { height: 18px; display: flex; align-items: center; justify-content: center; border-radius: 2px; }
.tool.on { background: #4d78c0; }
.view-info { margin: 4px 0 0 9px; font-size: 5.7px; line-height: 9.3px; color: #dcdcdc; }
.gizmo { position: absolute; left: 673px; top: 32px; }
.gz { font-size: 5px; fill: #123; text-anchor: middle; }
.nav-btns { position: absolute; left: 701px; top: 74px; display: flex; flex-direction: column; gap: 1.7px; }
.nav-btn { width: 14px; height: 14px; border-radius: 50%; background: #333432; display: flex; align-items: center; justify-content: center; }
.last-op { position: absolute; left: 34px; bottom: 2px; width: 82px; height: 12px; line-height: 12px; background: #2e2f2d; border-radius: 2px; color: #aaa; }
.last-op i { margin: 0 3px; }

/* 菜单 */
.menu {
  position: absolute;
  background: #282828;
  border-radius: 3px;
  box-sizing: border-box;
  font-size: 5.8px;
  color: #cfcfcf;
}
.main-menu { left: 215px; top: 223px; width: 94px; height: 234px; padding: 2px 1px; }
.sub-menu { left: 309px; top: 223px; width: 93px; height: 87px; padding: 1.8px 0; border-radius: 0 3px 3px 0; }
.row { height: 10.1px; display: flex; align-items: center; position: relative; padding: 0 3px 0 15px; }
.sub-menu .row { padding-left: 15px; height: 10.4px; }
.row.active { background: #4d72b2; color: #e8e8e8; border-radius: 2px; }
.row.muted { color: #7b7b7b; }
.row-ic { position: absolute; left: 2px; }
.label { flex: 1; white-space: nowrap; }
.key { color: #777; }
.arrow { color: #bbb; font-size: 5px; margin-left: 1px; }
.sep { height: 5.2px; position: relative; }
.sep::after { content: ''; position: absolute; left: 0; right: 0; top: 2px; height: 1px; background: #383838; }
.cursor { position: absolute; left: 339px; top: 237px; }

/* 时间线 */
.timeline { height: 36px; flex: none; display: flex; flex-direction: column; }
.tl-header { height: 13px; flex: none; display: flex; align-items: center; background: #333432; }
.tl-clock { margin-left: 6px; }
.tl-menu { display: flex; align-items: center; margin-left: 8px; color: #bdbdbd; }
.tl-menu.first { margin-left: 5px; }
.rec { width: 9px; height: 10px; background: #5a5b59; border-radius: 2px 0 0 2px; position: relative; margin-left: 191px; }
.rec::after { content: ''; position: absolute; left: 2.5px; top: 3px; width: 4px; height: 4px; background: #e8e8e8; border-radius: 50%; }
.rec-caret { width: 9px; color: #555; text-align: center; margin-left: 1px; }
.transport { display: flex; align-items: center; justify-content: space-around; width: 60px; height: 10px; background: #5a5b59; margin-left: 5px; border-radius: 2px; }
.frame-field { width: 37px; height: 10px; line-height: 10px; text-align: center; background: #565755; color: #ddd; border-radius: 2px; }
.clock-btn { width: 9px; height: 10px; margin-left: 3px; background: #565755; display: flex; align-items: center; justify-content: center; }
.range { width: 44px; height: 10px; padding: 0 3px; box-sizing: border-box; display: flex; justify-content: space-between; align-items: center; background: #4e4f4d; color: #ccc; }
.range.end { margin-left: 1px; margin-right: 3px; border-radius: 0 2px 2px 0; width: 50px; }
.ruler {
  position: relative;
  height: 14px;
  flex: none;
  display: flex;
  background: #2a2b2a;
  padding-left: 37.36px;
  align-items: flex-start;
}
.tick { position: relative; width: 26.72px; height: 14px; flex: none; text-align: center; padding-top: 3.5px; box-sizing: border-box; color: #aaa; }
.tick::after { content: ''; position: absolute; left: 50%; bottom: 0; width: 1px; height: 4px; background: #3f403e; }
.cur-frame { position: absolute; left: 21px; top: 1px; width: 12px; height: 8px; line-height: 8px; background: #4d78c0; color: #fff; text-align: center; border-radius: 1.5px; }
.cur-line { position: absolute; left: 26.5px; top: 9px; width: 1px; height: 9px; background: #6f93cf; }
.tl-track { flex: 1; background: #2e2f2d; padding: 3px 4px 0 5px; box-sizing: border-box; }
.scroll { display: block; height: 4px; background: #6a6b68; border-radius: 2px; }

/* 大纲 */
.outliner { height: 152px; flex: none; background: #292a29; }
.ol-header { height: 14px; display: flex; align-items: center; background: #353634; padding: 0 2px 0 7px; }
.ol-btn { display: flex; align-items: center; margin-right: 6px; }
.search { display: flex; align-items: center; width: 42px; height: 10px; background: #232323; border-radius: 2px; padding-left: 2px; }
.search.wide { width: 56px; margin-left: 20px; }
.new-col { margin-left: 8px; }
.ol-rows { padding-top: 10px; }
.ol-row { height: 10.3px; display: flex; align-items: center; position: relative; padding-right: 2px; font-size: 5.5px; color: #bdbdbd; }
.ol-row.lv1 { padding-left: 14px; }
.ol-row.lv2 { padding-left: 24px; }
.ol-row.sel { background: #465f99; color: #e4a66e; }
.ol-mode { position: absolute; left: 3px; }
.tri { font-size: 5px; width: 6px; color: #bbb; }
.ol-name { margin-left: 2px; }
.ol-extra { display: flex; gap: 2px; margin-left: 7px; }
.ol-check { margin-right: 3px; }

/* 属性 */
.props { flex: 1; background: #333432; display: flex; flex-direction: column; min-height: 0; }
.prop-header { height: 19px; display: flex; align-items: center; padding-left: 6px; flex: none; background: #2f302e; }
.prop-main { flex: 1; display: flex; min-height: 0; }
.prop-tabs { width: 16px; flex: none; padding-top: 1px; display: flex; flex-direction: column; gap: 3.5px; background: #262726; }
.tab-group { display: flex; flex-direction: column; }
.ptab { height: 14.6px; display: flex; align-items: center; justify-content: center; }
.ptab.on { background: #454644; border-radius: 2px 0 0 2px; }
.panel { flex: 1; background: #454644; padding: 0 1px 0 4px; min-width: 0; }
.obj-line { height: 13px; margin-top: 1px; display: flex; align-items: center; gap: 3px; padding: 0 1px 0 1px; }
.add-mod { display: flex; justify-content: space-between; align-items: center; height: 10px; margin-top: 7px; padding: 0 2px 0 5px; background: #2a2b2a; border-radius: 2px; }
.mod-box { margin-top: 4px; background: #41423f; border-radius: 2px 2px 0 0; padding-top: 2px; padding-bottom: 10px; }
.mod-head { display: flex; align-items: center; height: 11px; padding-left: 2px; }
.tri.down { width: 6px; }
.mod-name { width: 28px; height: 10px; line-height: 10px; padding-left: 4px; margin-left: 1px; box-sizing: border-box; background: #222; border-radius: 2px; }
.mod-toggles { display: flex; margin-left: 1px; }
.mod-toggles i { width: 10px; height: 10px; background: #5a5b59; display: flex; align-items: center; justify-content: center; }
.mod-toggles i.on { background: #4d78c0; }
.mod-x { margin-left: 5px; color: #bbb; }
.form-row { display: flex; align-items: center; height: 10px; margin-top: 2px; }
.first-axis { margin-top: 5px; }
.form-row label { width: 44px; margin-right: 4px; text-align: right; flex: none; }
.seg { display: flex; width: 67px; gap: .5px; }
.seg span { flex: 1; height: 10px; line-height: 10px; text-align: center; background: #565755; color: #ccc; }
.seg span:first-child { border-radius: 2px 0 0 2px; }
.seg span:last-child { border-radius: 0 2px 2px 0; }
.seg span.on { background: #4d78c0; color: #e8e8e8; }
.mirror-obj { margin-top: 5px; }
.obj-field { display: flex; align-items: center; width: 67px; height: 10px; padding: 0 1.5px; box-sizing: border-box; background: #222; border-radius: 2px; }
.limit { margin-top: 1.5px; }
.merge { margin-top: 2px; }
.cb { width: 6px; height: 6px; background: #5a5b59; border-radius: 1px; flex: none; }
.cb.on { background: #4d78c0; color: #fff; line-height: 6px; text-align: center; font-size: 5px; }
.cb-text { margin-left: 3px; color: #b8b8b8; }
.limit .dec { margin-left: 41px; }
.num { width: 56px; height: 10px; line-height: 10px; margin-left: 4px; text-align: center; background: #5a5b59; border-radius: 2px; }
.merge .dec { margin-left: 6px; }
.sub-panel { margin: 6px 0 0 8px; }
.sub-panel .tri { margin-right: 1px; }

/* 状态栏 */
.status { height: 11px; margin-bottom: 5px; flex: none; display: flex; align-items: center; background: #2f302e; color: #a8a8a8; }
.st { display: flex; align-items: center; gap: 3px; }
.st.first { margin-left: 6px; }
.st.box { margin-left: 6px; }
.st.rot { margin-left: 72px; }
.st.call { margin-left: 92px; }
.version { margin-right: 5px; color: #999; }

/* 水印 */
.wm-top { position: absolute; z-index: 2; left: 645px; top: 26px; display: flex; align-items: center; height: 20px; color: #f4f4f4; }
.wm-name { width: 140px; font: 400 19.5px/20px Roboto, sans-serif; letter-spacing: .4px; }
.wm-bili { align-self: flex-start; margin-top: -11px; font: 700 38px/38px 'Liberation Sans', sans-serif; transform: scaleX(.62); transform-origin: left center; }
.wm-bottom { position: absolute; z-index: 2; left: 638px; top: 409px; color: rgba(255, 255, 255, 0.09); }
.wm-en { font: 300 25.5px/30px Lato, sans-serif; letter-spacing: .5px; }
.wm-cn { font: 300 16.1px/20px 'Noto Sans CJK SC', sans-serif; }
</style>
